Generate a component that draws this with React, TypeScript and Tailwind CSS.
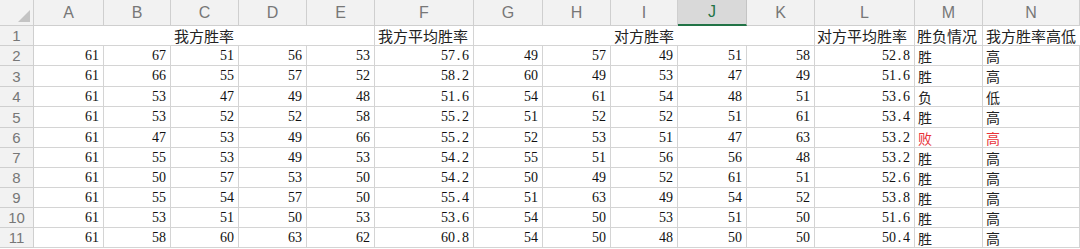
import React from "react";

/* =========================
DATA
========================= */

const COLS = ["A", "B", "C", "D", "E", "F", "G", "H", "I", "J", "K", "L", "M", "N"];

type Row = {
  mine: number[];
  mineAvg: string;
  theirs: number[];
  theirAvg: string;
  result: string;
  level: string;
  red?: boolean;
};

const ROWS: Row[] = [
  { mine: [61, 67, 51, 56, 53], mineAvg: "57.6", theirs: [49, 57, 49, 51, 58], theirAvg: "52.8", result: "胜", level: "高" },
  { mine: [61, 66, 55, 57, 52], mineAvg: "58.2", theirs: [60, 49, 53, 47, 49], theirAvg: "51.6", result: "胜", level: "高" },
  { mine: [61, 53, 47, 49, 48], mineAvg: "51.6", theirs: [54, 61, 54, 48, 51], theirAvg: "53.6", result: "负", level: "低" },
  { mine: [61, 53, 52, 52, 58], mineAvg: "55.2", theirs: [51, 52, 52, 51, 61], theirAvg: "53.4", result: "胜", level: "高" },
  { mine: [61, 47, 53, 49, 66], mineAvg: "55.2", theirs: [52, 53, 51, 47, 63], theirAvg: "53.2", result: "败", level: "高", red: true },
  { mine: [61, 55, 53, 49, 53], mineAvg: "54.2", theirs: [55, 51, 56, 56, 48], theirAvg: "53.2", result: "胜", level: "高" },
  { mine: [61, 50, 57, 53, 50], mineAvg: "54.2", theirs: [50, 49, 52, 61, 51], theirAvg: "52.6", result: "胜", level: "高" },
  { mine: [61, 55, 54, 57, 50], mineAvg: "55.4", theirs: [51, 63, 49, 54, 52], theirAvg: "53.8", result: "胜", level: "高" },
  { mine: [61, 53, 51, 50, 53], mineAvg: "53.6", theirs: [54, 50, 53, 51, 50], theirAvg: "51.6", result: "胜", level: "高" },
  { mine: [61, 58, 60, 63, 62], mineAvg: "60.8", theirs: [54, 50, 48, 50, 50], theirAvg: "50.4", result: "胜", level: "高" },
];

const NUM = "font-['Liberation_Serif',serif] text-[14px] leading-none";
const CJK = "font-['Noto_Sans_CJK_SC',sans-serif] leading-none";

/* =========================
CELLS
========================= */

function Num({ v }: { v: number | string }) {
  const [a, b] = String(v).split(".");
  return (
    <div className={`flex items-center justify-end pr-[4px] border-r border-b border-[#d4d4d4] text-[#111] overflow-hidden ${NUM}`}>
      {a}
      {b !== undefined && (
        <>
          <span className="inline-block w-[7px] text-center">.</span>
          {b}
        </>
      )}
    </div>
  );
}

function Txt({ v, red }: { v: string; red?: boolean }) {
  return (
    <div
      className={`flex items-center pl-[3px] border-r border-b border-[#d4d4d4] overflow-hidden text-[14px] ${CJK} ${
        red ? "text-[#e8333a]" : "text-[#222]"
      }`}
    >
      {v}
    </div>
  );
}

function RowHead({ n }: { n: number }) {
  return (
    <div className="flex items-center justify-center bg-[#f2f2f2] border-r border-b border-[#cfcfcf] text-[#777] text-[15px] leading-none font-['Liberation_Sans',sans-serif] overflow-hidden">
      {n}
    </div>
  );
}

/* =========================
APP
========================= */

export default function App() {
  return (
    <div className="w-[1080px] h-[249px] overflow-hidden bg-white">
      <div className="grid grid-cols-[34px_70px_67px_68px_68px_68px_99px_69px_68px_67px_69px_68px_100px_68px_97px] grid-rows-[26px_20px_20px_21px_20px_21px_20px_20px_20px_20px_20px_20px]">
        {/* CORNER */}
        <div className="bg-[#f2f2f2] border-r border-b border-[#cfcfcf] flex items-end justify-end p-[3px]">
          <svg width="12" height="12" viewBox="0 0 12 12">
            <polygon points="12,0 12,12 0,12" fill="#c4c4c4" />
          </svg>
        </div>

        {/* COLUMN HEADERS */}
        {COLS.map((c) => (
          <div
            key={c}
            className={`flex items-center justify-center border-r text-[16px] leading-none font-['Liberation_Sans',sans-serif] ${
              c === "J"
                ? "bg-[#d9d9d9] text-[#217346] border-b-2 border-b-[#217346] border-r-[#c4c4c4]"
                : "bg-[#f2f2f2] text-[#777] border-b border-[#cfcfcf]"
            }`}
          >
            {c}
          </div>
        ))}

        {/* ROW 1 */}
        <RowHead n={1} />
        <div className={`col-span-5 flex items-center justify-center border-r border-b border-[#d4d4d4] text-[#222] text-[15px] ${CJK}`}>
          我方胜率
        </div>
        <div className={`flex items-center pl-[3px] border-r border-b border-[#d4d4d4] text-[#222] text-[15px] ${CJK}`}>
          我方平均胜率
        </div>
        <div className={`col-span-5 flex items-center justify-center border-r border-b border-[#d4d4d4] text-[#222] text-[15px] ${CJK}`}>
          对方胜率
        </div>
        <div className={`flex items-center pl-[2px] border-r border-b border-[#d4d4d4] text-[#222] text-[15px] whitespace-nowrap ${CJK}`}>
          对方平均胜率
        </div>
        <div className={`flex items-center pl-[2px] border-r border-b border-[#d4d4d4] text-[#222] text-[15px] whitespace-nowrap ${CJK}`}>
          胜负情况
        </div>
        <div className={`flex items-center pl-[3px] border-b border-[#d4d4d4] text-[#222] text-[15px] whitespace-nowrap ${CJK}`}>
          我方胜率高低
        </div>

        {/* DATA ROWS */}
        {ROWS.map((r, i) => (
          <React.Fragment key={i}>
            <RowHead n={i + 2} />
            {r.mine.map((v, j) => (
              <Num key={`m${j}`} v={v} />
            ))}
            <Num v={r.mineAvg} />
            {r.theirs.map((v, j) => (
              <Num key={`t${j}`} v={v} />
            ))}
            <Num v={r.theirAvg} />
            <Txt v={r.result} red={r.red} />
            <Txt v={r.level} red={r.red} />
          </React.Fragment>
        ))}
      </div>
    </div>
  );
}
